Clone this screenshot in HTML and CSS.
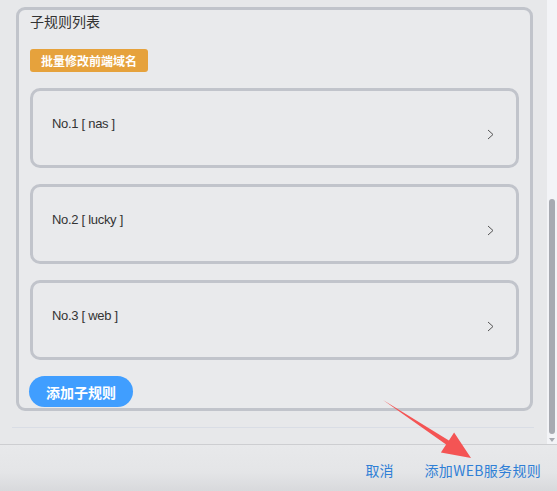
FILE: index.html
```html
<!DOCTYPE html>
<html lang="zh-CN">
<head>
  <meta charset="UTF-8" />
  <meta name="viewport" content="width=device-width, initial-scale=1.0"/>
  <title>子规则列表</title>
  <link rel="stylesheet" href="styles.css">
</head>
<body>

  <div class="scroll-area">
    <div class="content">
      <div class="rule-box">
        <div class="box-title">子规则列表</div>
        <button class="btn-warning">批量修改前端域名</button>

        <div class="rule-card">
          <span class="rule-name">No.1 [ nas ]</span>
          <svg class="chevron" width="7" height="11" viewBox="0 0 7 11"><path d="M1 1 L6 5.5 L1 10" fill="none" stroke="#555" stroke-width="1"/></svg>
        </div>
        <div class="rule-card">
          <span class="rule-name">No.2 [ lucky ]</span>
          <svg class="chevron" width="7" height="11" viewBox="0 0 7 11"><path d="M1 1 L6 5.5 L1 10" fill="none" stroke="#555" stroke-width="1"/></svg>
        </div>
        <div class="rule-card">
          <span class="rule-name">No.3 [ web ]</span>
          <svg class="chevron" width="7" height="11" viewBox="0 0 7 11"><path d="M1 1 L6 5.5 L1 10" fill="none" stroke="#555" stroke-width="1"/></svg>
        </div>

        <button class="btn-primary">添加子规则</button>
      </div>
      <div class="divider"></div>
    </div>

    <!-- Scrollbar -->
    <div class="scrollbar">
      <div class="thumb"></div>
      <div class="arrow-down"></div>
    </div>
  </div>

  <div class="footer">
    <span class="link">取消</span>
    <span class="link">添加WEB服务规则</span>
  </div>

  <!-- Annotation arrow -->
  <svg class="annotation" width="557" height="491" viewBox="0 0 557 491">
    <polygon points="383,400 448.9,440.4 454.1,432.4 471,458 440.9,452.6 446.1,444.6" fill="#f45454"/>
  </svg>

</body>
</html>
```

FILE: styles.css
```css
* {
  box-sizing: border-box;
  margin: 0;
  padding: 0;
}

body {
  width: 557px;
  height: 491px;
  overflow: hidden;
  background: #e7e8ea;
  font-family: "Liberation Sans", "Noto Sans CJK SC", sans-serif;
  color: #333;
  position: relative;
}

.scroll-area {
  height: 445px;
  display: flex;
  border-bottom: 1px solid #cdced1;
}

.content {
  flex: 1;
  padding: 7px 14px 0 16px;
}

.rule-box {
  border: 3px solid #c1c4cb;
  border-radius: 9px;
  background: #e9eaec;
  padding: 2px 11px 1px 11px;
}

.box-title {
  font-size: 14px;
  line-height: 20px;
  color: #333;
}

.btn-warning {
  display: block;
  margin-top: 17px;
  height: 23px;
  padding: 0 11px;
  border: none;
  border-radius: 3px;
  background: #e6a23c;
  color: #fff;
  font-family: "Noto Sans CJK SC", sans-serif;
  font-size: 12px;
  font-weight: bold;
}

.rule-card {
  margin-top: 16px;
  height: 80px;
  border: 3px solid #c1c4cb;
  border-radius: 10px;
  background: #e9eaec;
  display: flex;
  justify-content: space-between;
  padding: 25px 22px 0 19px;
}

.rule-name {
  font-size: 13px;
  line-height: 16px;
  letter-spacing: -0.3px;
  color: #333;
}

.chevron {
  margin-top: 13px;
}

.btn-primary {
  display: block;
  margin-top: 16px;
  margin-left: -1px;
  height: 31px;
  padding: 0 17px;
  border: none;
  border-radius: 16px;
  background: #409eff;
  color: #fff;
  font-family: "Noto Sans CJK SC", sans-serif;
  font-size: 14px;
  font-weight: bold;
}

.divider {
  margin: 16px -1px 0 -4px;
  height: 1px;
  background: #d9dde5;
}

.scrollbar {
  width: 10px;
  background: #f3f4f7;
  padding-top: 199px;
}

.thumb {
  margin-left: 2px;
  width: 6px;
  height: 235px;
  border-radius: 3px;
  background: #a7aab1;
}

.arrow-down {
  margin: 4px 0 0 2px;
  width: 0;
  height: 0;
  border-left: 3px solid transparent;
  border-right: 3px solid transparent;
  border-top: 4px solid #a7aab1;
}

.footer {
  height: 46px;
  display: flex;
  justify-content: flex-end;
  align-items: center;
  gap: 31px;
  padding: 4px 16px 0 0;
  background: linear-gradient(#e8e9eb, #e4e5e7 60%, #d8d9dc);
}

.link {
  font-family: "Noto Sans CJK SC", sans-serif;
  font-size: 14px;
  color: #2f7fd6;
}

.link + .link {
  letter-spacing: 0.3px;
}

.annotation {
  position: absolute;
  top: 0;
  left: 0;
  pointer-events: none;
}
```
